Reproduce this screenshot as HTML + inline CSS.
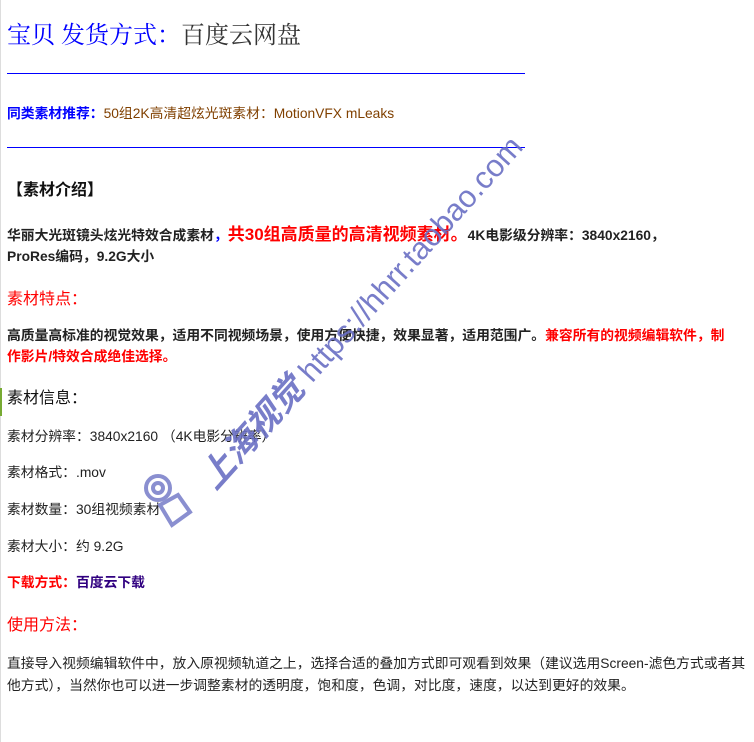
<!DOCTYPE html>
<html><head><meta charset="utf-8"><style>
body{margin:0;width:754px;height:742px;background:#fff;position:relative;overflow:hidden;font-family:"Liberation Sans","Noto Sans CJK SC",sans-serif;color:#222}
.a{position:absolute;white-space:nowrap;left:7px}
.hr{position:absolute;left:7px;width:518px;height:1px;background:#00f}
.b{font-weight:bold}
.r{color:#f00}
.s13{font-size:13.8px}
.s16{font-size:16px}
</style></head><body>
<div style="position:absolute;left:0;top:0;width:1px;height:742px;background:#ddd"></div>
<div style="position:absolute;left:0;top:388px;width:2px;height:28px;background:#7a3"></div>

<div class="a" style="top:15px;font-size:24px;font-family:'Liberation Serif','Noto Serif CJK SC',serif;"><span style="color:#00f">宝贝 发货方式：</span><span style="color:#333">百度云网盘</span></div>
<div class="hr" style="top:73px"></div>
<div class="a s13" style="top:102px"><span class="b" style="color:#00f">同类素材推荐：</span><span style="color:#804000">50组2K高清超炫光斑素材：MotionVFX mLeaks</span></div>
<div class="hr" style="top:147px"></div>
<div class="a b" style="top:176px;font-size:16px;color:#111">【素材介绍】</div>
<div class="a b s13" style="top:220px;color:#222">华丽大光斑镜头炫光特效合成素材<span style="color:#00f">，</span><span class="r" style="font-size:17px">共30组高质量的高清视频素材。</span>4K电影级分辨率：3840x2160，</div>
<div class="a b s13" style="top:245px">ProRes编码，9.2G大小</div>
<div class="a r s16" style="top:285px">素材特点：</div>
<div class="a b s13" style="top:324px">高质量高标准的视觉效果，适用不同视频场景，使用方便快捷，效果显著，适用范围广。<span class="r">兼容所有的视频编辑软件，制</span></div>
<div class="a b s13 r" style="top:345px">作影片/特效合成绝佳选择。</div>
<div class="a s16" style="top:384px;color:#111">素材信息：</div>
<div class="a s13" style="top:425px">素材分辨率：3840x2160 （4K电影分辨率）</div>
<div class="a s13" style="top:461px">素材格式：.mov</div>
<div class="a s13" style="top:498px">素材数量：30组视频素材</div>
<div class="a s13" style="top:535px">素材大小：约 9.2G</div>
<div class="a s13 b" style="top:571px"><span class="r">下载方式：</span><span style="color:#300080">百度云下载</span></div>
<div class="a r s16" style="top:611px">使用方法：</div>
<div class="a s13" style="top:652px">直接导入视频编辑软件中，放入原视频轨道之上，选择合适的叠加方式即可观看到效果（建议选用Screen-滤色方式或者其</div>
<div class="a s13" style="top:674px">他方式），当然你也可以进一步调整素材的透明度，饱和度，色调，对比度，速度，以达到更好的效果。</div>

<div style="position:absolute;left:362px;top:312px;width:0;height:0">
<div style="position:absolute;left:-260px;top:-20px;width:520px;text-align:center;transform:rotate(-48deg);color:#6a6fc4;opacity:.9;white-space:nowrap;font-size:31px;line-height:40px">
<span style="font-weight:bold;font-style:italic;font-size:34px">上海视觉</span> https://hhrr.taobao.com</div>
</div>
<svg style="position:absolute;left:140px;top:470px" width="60" height="65" viewBox="0 0 60 65">
<g fill="none" stroke="#8a8fd0" stroke-width="4">
<circle cx="18" cy="18" r="12"/><circle cx="18" cy="18" r="5"/>
<path d="M20 35 L38 25 L50 42 L32 55 Z"/>
</g></svg>
</body></html>
